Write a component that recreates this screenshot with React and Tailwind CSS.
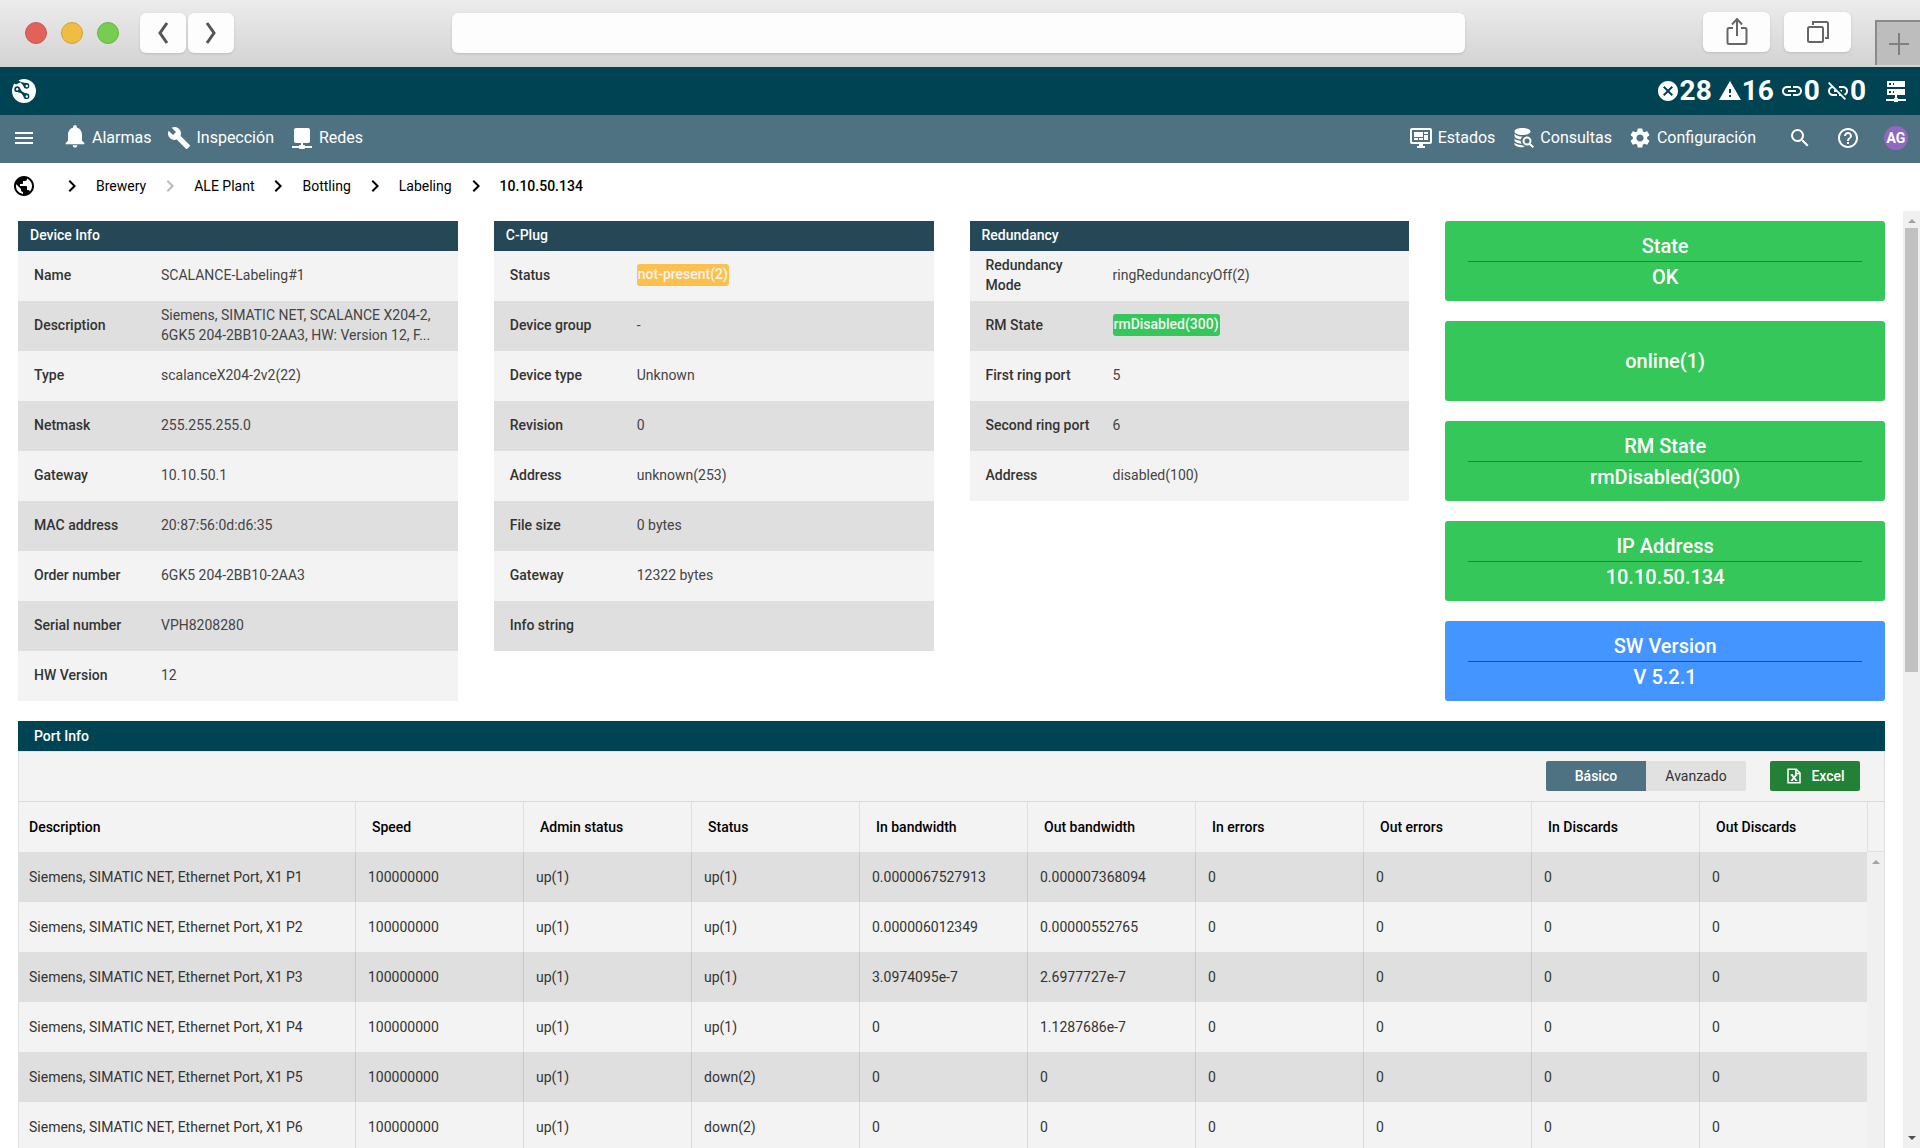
import clsx from "clsx";
import {
  MdBuild,
  MdCancel,
  MdChevronRight,
  MdHelpOutline,
  MdLink,
  MdLinkOff,
  MdMenu,
  MdNotifications,
  MdPublic,
  MdSearch,
  MdSettings,
  MdWarning,
} from "react-icons/md";

const deviceInfo = [
  ["Name", "SCALANCE-Labeling#1"],
  ["Description", "Siemens, SIMATIC NET, SCALANCE X204-2, 6GK5 204-2BB10-2AA3, HW: Version 12, F..."],
  ["Type", "scalanceX204-2v2(22)"],
  ["Netmask", "255.255.255.0"],
  ["Gateway", "10.10.50.1"],
  ["MAC address", "20:87:56:0d:d6:35"],
  ["Order number", "6GK5 204-2BB10-2AA3"],
  ["Serial number", "VPH8208280"],
  ["HW Version", "12"],
];

const cPlug = [
  ["Status", "not-present(2)", "bg-[#fdc04f]"],
  ["Device group", "-"],
  ["Device type", "Unknown"],
  ["Revision", "0"],
  ["Address", "unknown(253)"],
  ["File size", "0 bytes"],
  ["Gateway", "12322 bytes"],
  ["Info string", ""],
];

const redundancy = [
  ["Redundancy Mode", "ringRedundancyOff(2)"],
  ["RM State", "rmDisabled(300)", "bg-[#35c759]"],
  ["First ring port", "5"],
  ["Second ring port", "6"],
  ["Address", "disabled(100)"],
];

const tiles = [
  { title: "State", value: "OK" },
  { value: "online(1)" },
  { title: "RM State", value: "rmDisabled(300)" },
  { title: "IP Address", value: "10.10.50.134" },
  { title: "SW Version", value: "V 5.2.1", blue: true },
];

const columns = [
  "Description",
  "Speed",
  "Admin status",
  "Status",
  "In bandwidth",
  "Out bandwidth",
  "In errors",
  "Out errors",
  "In Discards",
  "Out Discards",
];

const ports = [
  ["P1", "up(1)", "0.0000067527913", "0.000007368094"],
  ["P2", "up(1)", "0.000006012349", "0.00000552765"],
  ["P3", "up(1)", "3.0974095e-7", "2.6977727e-7"],
  ["P4", "up(1)", "0", "1.1287686e-7"],
  ["P5", "down(2)", "0", "0"],
  ["P6", "down(2)", "0", "0"],
].map(([port, status, inBw, outBw]) => [
  `Siemens, SIMATIC NET, Ethernet Port, X1 ${port}`,
  "100000000",
  "up(1)",
  status,
  inBw,
  outBw,
  "0",
  "0",
  "0",
  "0",
]);

function LogoIcon() {
  return (
    <svg viewBox="0 0 24 24" className="size-6">
      <circle cx="12" cy="12" r="12" fill="#fff" />
      <g fill="#004454">
        <path d="M2 4 L6 1 L9 3 L4 5.500Z" />
        <path d="M8 2.800 L12 7.500 L16 4.500Z" />
        <path d="M4 12.500 L7.500 8.500 L10 12.500 L16 15.500 L13 19.500 L9.500 14.500Z" />
        <circle cx="14.500" cy="6.800" r="2.900" />
        <circle cx="5.200" cy="10.200" r="2.900" />
        <circle cx="14.500" cy="17.200" r="2.900" />
      </g>
      <g fill="#fff">
        <circle cx="14.800" cy="7" r="1.200" />
        <circle cx="5.200" cy="10.200" r="1.200" />
        <circle cx="14.800" cy="17.500" r="1.200" />
      </g>
    </svg>
  );
}

function ServerNetworkIcon() {
  return (
    <svg viewBox="0 0 24 24" className="size-6" fill="currentColor">
      <path
        fillRule="evenodd"
        d="M3 2h18v6H3zM5 4v2h2V4zM9 4v2h1V4zM3 10h18v6H3zM5 12v2h2v-2zM9 12v2h1v-2zM11 16h2v3h1v1h8v2h-8v1h-4v-1H2v-2h8v-1h1z"
      />
    </svg>
  );
}

function NetworkIcon() {
  return (
    <svg viewBox="0 0 24 24" className="size-6" fill="currentColor">
      <path d="M6 2h12a2 2 0 0 1 2 2v11a2 2 0 0 1-2 2h-5v2h1a1 1 0 0 1 1 1h7v2h-7a1 1 0 0 1-1 1h-4a1 1 0 0 1-1-1H2v-2h7a1 1 0 0 1 1-1h1v-2H6a2 2 0 0 1-2-2V4a2 2 0 0 1 2-2z" />
    </svg>
  );
}

function MonitorDashboardIcon() {
  return (
    <svg viewBox="0 0 24 24" className="size-6" fill="currentColor">
      <path d="M21 16V4H3v12h18m0-14a2 2 0 0 1 2 2v12a2 2 0 0 1-2 2h-7v2h2v2H8v-2h2v-2H3a2 2 0 0 1-2-2V4c0-1.1.9-2 2-2h18M5 6h9v5H5V6m10 0h4v2h-4V6m4 3v5h-4V9h4M5 12h4v2H5v-2m5 0h4v2h-4v-2z" />
    </svg>
  );
}

function DatabaseSearchIcon() {
  return (
    <svg viewBox="0 0 24 24" className="size-6" fill="currentColor">
      <path d="M19.700 17.600c.5-.7.8-1.600.8-2.500 0-2.500-2-4.500-4.500-4.500s-4.500 2-4.500 4.500 2 4.500 4.500 4.500c.9 0 1.700-.3 2.400-.7l3.200 3.100 1.400-1.400-3.300-3M16 17.600a2.500 2.500 0 1 1 0-5 2.500 2.500 0 0 1 0 5z" />
      <path d="M3.500 5.500C3.500 3.500 7 2 11.500 2s8 1.500 8 3.500S16 9 11.500 9s-8-1.500-8-3.500zM3.500 7.700c1.300 1.700 4.200 2.800 7.800 2.900-.7.800-1.200 1.700-1.400 2.700-3.600-.3-6.400-1.700-6.400-3.300zM3.500 12.500c1.200 1.300 3.500 2.100 6.200 2.400.1 1 .4 2 .9 2.800-4-.2-7.100-1.600-7.100-3.400zM3.500 16.800c1.600 1.500 4.600 2.300 8 2.500.8.900 1.600 1.400 2.500 1.800-.8.100-1.600.1-2.500.1-4.500 0-8-1.500-8-3z" />
    </svg>
  );
}

function ExcelIcon() {
  return (
    <svg viewBox="0 0 24 24" className="size-[18px]" fill="none" stroke="currentColor" strokeWidth="2">
      <path d="M15 3H4v18h16V8z" />
      <path d="M14.500 3v5.500H20" />
      <path d="M9 10.500l6 7.500M15 10.500L9 18" strokeWidth="2.400" />
      <path d="M7.500 10.500h3M13.500 10.500h3M7.500 18h3M13.500 18h3" strokeWidth="1.500" />
    </svg>
  );
}

function BrowserBar() {
  return (
    <div className="flex h-[67px] shrink-0 items-start bg-linear-to-b from-[#ececec] to-[#d3d3d3] pl-[25px]">
      <div className="mt-[22px] flex gap-[14px]">
        <span className="size-[22px] rounded-full border border-[#cf5650] bg-[#e0625b]" />
        <span className="size-[22px] rounded-full border border-[#d3a13c] bg-[#f0bd42]" />
        <span className="size-[22px] rounded-full border border-[#66b544] bg-[#78cc52]" />
      </div>
      <div className="mt-[13px] ml-[21px] flex gap-0.5">
        <button aria-label="Back" className="flex h-10 w-[46px] items-center justify-center rounded-md bg-[#fdfdfd] shadow-sm">
          <svg viewBox="0 0 12 24" className="h-6 w-3" fill="none" stroke="#555" strokeWidth="3">
            <path d="M10 2 L3 12 L10 22" />
          </svg>
        </button>
        <button aria-label="Forward" className="flex h-10 w-[46px] items-center justify-center rounded-md bg-[#fdfdfd] shadow-sm">
          <svg viewBox="0 0 12 24" className="h-6 w-3" fill="none" stroke="#555" strokeWidth="3">
            <path d="M2 2 L9 12 L2 22" />
          </svg>
        </button>
      </div>
      <input aria-label="Address bar" className="mt-[13px] ml-[218px] h-10 min-w-0 flex-1 rounded-md bg-[#fdfdfd] px-4 shadow-sm" />
      <div className="mt-3 mr-6 ml-[238px] flex gap-[14px]">
        <button aria-label="Share" className="flex h-10 w-[67px] items-center justify-center rounded-md bg-[#fdfdfd] shadow-sm">
          <svg viewBox="0 0 22 28" className="h-7 w-[22px]" fill="none" stroke="#666" strokeWidth="2">
            <path d="M7 10H3a1.500 1.500 0 0 0-1.500 1.500v13A1.500 1.500 0 0 0 3 26h16a1.500 1.500 0 0 0 1.500-1.500v-13A1.500 1.500 0 0 0 19 10h-4M11 18V1M6 6.500L11 1l5 5.500" />
          </svg>
        </button>
        <button aria-label="Show tabs" className="flex h-10 w-[67px] items-center justify-center rounded-md bg-[#fdfdfd] shadow-sm">
          <svg viewBox="0 0 24 24" className="size-6" fill="none" stroke="#666" strokeWidth="2">
            <rect x="2" y="7" width="15" height="15" rx="1.500" />
            <path d="M7 5V2h13.500a1.500 1.500 0 0 1 1.500 1.500V18h-3" />
          </svg>
        </button>
      </div>
      <button aria-label="New tab" className="mt-5 flex h-[45px] w-[45px] items-center justify-center border-t-2 border-l-2 border-[#8a8a8a] bg-[#bdbdbd]">
        <svg viewBox="0 0 20 22" className="h-[22px] w-5" stroke="#808080" strokeWidth="2">
          <path d="M10 0V22M0 11H20" />
        </svg>
      </button>
    </div>
  );
}

function Counter({ icon, value, label }) {
  return (
    <span aria-label={label} className="flex items-center">
      {icon}
      {value}
    </span>
  );
}

function NavItem({ icon, text }) {
  return (
    <a href="#" className="flex items-center gap-[5px]">
      {icon}
      {text}
    </a>
  );
}

function TopBars() {
  return (
    <header className="shrink-0 text-white">
      <div className="flex h-12 items-center justify-between bg-[#004454] px-3">
        <a href="#" aria-label="Home">
          <LogoIcon />
        </a>
        <div className="flex items-center gap-1.5 text-[28px] leading-none font-bold">
          <Counter label="Errors" value="28" icon={<MdCancel className="size-6" />} />
          <Counter label="Warnings" value="16" icon={<MdWarning className="size-6" />} />
          <Counter label="Linked" value="0" icon={<MdLink className="size-6" />} />
          <Counter label="Unlinked" value="0" icon={<MdLinkOff className="size-6" />} />
          <button aria-label="Servers" className="ml-3">
            <ServerNetworkIcon />
          </button>
        </div>
      </div>
      <nav className="flex h-12 items-center bg-[#4f7282] px-3 pb-0.5 text-base">
        <button aria-label="Menu" className="mr-[27px]">
          <MdMenu className="size-6" />
        </button>
        <div className="flex gap-4">
          <NavItem text="Alarmas" icon={<MdNotifications className="-mx-0.5 mb-1 size-7" />} />
          <NavItem text="Inspección" icon={<MdBuild className="size-6" />} />
          <NavItem text="Redes" icon={<NetworkIcon />} />
        </div>
        <div className="ml-auto flex gap-4">
          <NavItem text="Estados" icon={<MonitorDashboardIcon />} />
          <NavItem text="Consultas" icon={<DatabaseSearchIcon />} />
          <NavItem text="Configuración" icon={<MdSettings className="size-6" />} />
        </div>
        <div className="ml-8 flex items-center gap-6">
          <button aria-label="Search">
            <MdSearch className="size-6" />
          </button>
          <button aria-label="Help">
            <MdHelpOutline className="size-6" />
          </button>
          <button className="size-6 rounded-full bg-[#9068be] text-sm font-bold">AG</button>
        </div>
      </nav>
    </header>
  );
}

function Breadcrumb() {
  const items = ["Brewery", "ALE Plant", "Bottling", "Labeling"];
  return (
    <nav aria-label="Breadcrumb" className="flex h-12 shrink-0 items-center px-3 pb-0.5 text-sm text-black">
      <a href="#" aria-label="World" className="mr-6">
        <MdPublic className="size-6" />
      </a>
      {items.map((item, i) => (
        <span key={item} className="flex items-center">
          <MdChevronRight className={clsx("mr-3 size-6", i === 1 && "text-[#bbb]")} />
          <a href="#" className="mr-3">
            {item}
          </a>
        </span>
      ))}
      <MdChevronRight className="mr-3 size-6" />
      <span className="font-medium">10.10.50.134</span>
    </nav>
  );
}

function InfoPanel({ title, rows }) {
  return (
    <section className="text-sm leading-5 text-[#333]">
      <h2 className="h-[30px] bg-[#244856] px-3 leading-[28px] font-medium text-white">{title}</h2>
      <dl>
        {rows.map(([name, value, badge]) => (
          <div key={name} className="flex h-[50px] items-center bg-[#f3f3f3] px-4 pb-0.5 even:bg-[#dfdfdf]">
            <dt className="w-[127px] shrink-0 pr-4 font-medium">{name}</dt>
            <dd className="text-[#444]">
              {badge ? <span className={clsx("inline-block rounded-[3px] px-px pb-0.5 font-medium text-[#f3f3f3]", badge)}>{value}</span> : value}
            </dd>
          </div>
        ))}
      </dl>
    </section>
  );
}

function Tile({ title, value, blue }) {
  return (
    <div
      className={clsx(
        "flex h-20 flex-col justify-center rounded-[3px] px-[23px] text-center text-xl leading-[30px] font-medium text-white",
        blue ? "bg-[#4495ff]" : "bg-[#35c759]"
      )}
    >
      {title && <div className={clsx("border-b", blue ? "border-[#0f52b5]" : "border-[#23833b]")}>{title}</div>}
      <div>{value}</div>
    </div>
  );
}

function Arrow({ down }) {
  return (
    <svg viewBox="0 0 8 4" className="mx-auto h-1 w-2" fill={down ? "#505050" : "#a3a3a3"}>
      <path d={down ? "M0 0H8L4 4Z" : "M0 4H8L4 0Z"} />
    </svg>
  );
}

function PortTable() {
  return (
    <section className="mt-5 text-sm text-[#333]">
      <h2 className="h-[30px] bg-[#004454] px-4 leading-[30px] font-medium text-white">Port Info</h2>
      <div className="border border-[#dee2e6] bg-[#f3f3f3]">
        <div className="flex h-[50px] items-center justify-end border-b border-[#d6dadc] pr-6 pb-px">
          <button className="h-[30px] w-[100px] rounded-l-xs bg-[#4f7282] font-medium text-white">Básico</button>
          <button className="h-[30px] w-[100px] rounded-r-xs bg-[#e1e1e1]">Avanzado</button>
          <button className="ml-6 flex h-[30px] w-[90px] items-center justify-center gap-2 rounded-xs bg-[#228137] font-medium text-white">
            <ExcelIcon />
            Excel
          </button>
        </div>
        <div className="flex">
          <div className="min-w-0 flex-1">
            <table className="w-full table-fixed border-separate border-spacing-0 text-left">
              <thead className="text-black">
                <tr className="h-[50px]">
                  {columns.map((col) => (
                    <th key={col} className="border-l border-[#dee2e6] pl-4 font-medium first:w-2/11 first:border-l-0 first:pl-2.5">
                      {col}
                    </th>
                  ))}
                </tr>
              </thead>
              <tbody>
                {ports.map((row) => (
                  <tr key={row[0]} className="h-[50px] odd:bg-[#dfdfdf]">
                    {row.map((cell, i) => (
                      <td key={i} className="border-l border-black/10 pl-3 first:border-l-0 first:pl-2.5">
                        {cell}
                      </td>
                    ))}
                  </tr>
                ))}
              </tbody>
            </table>
          </div>
          <div className="w-[17px] bg-[#f0f0f0]">
            <div className="h-[50px] border-b border-l border-[#dee2e6] bg-[#f3f3f3]" />
            <div className="pt-2">
              <Arrow />
            </div>
          </div>
        </div>
      </div>
    </section>
  );
}

export default function App() {
  return (
    <div className="flex h-screen flex-col overflow-hidden bg-white font-['Roboto',sans-serif]">
      <BrowserBar />
      <TopBars />
      <Breadcrumb />
      <div className="flex min-h-0 flex-1">
        <main className="min-w-0 flex-1 overflow-hidden px-[18px] pt-2.5">
          <div className="grid grid-cols-4 items-start gap-9">
            <InfoPanel title="Device Info" rows={deviceInfo} />
            <InfoPanel title="C-Plug" rows={cPlug} />
            <InfoPanel title="Redundancy" rows={redundancy} />
            <div className="flex flex-col gap-5">
              {tiles.map((tile) => (
                <Tile key={tile.value} {...tile} />
              ))}
            </div>
          </div>
          <PortTable />
        </main>
        <div className="flex w-[17px] flex-col bg-[#f0f0f0] pt-2 pb-2">
          <Arrow />
          <div className="mx-auto mt-[5px] h-[444px] w-[13px] bg-[#c1c1c1]" />
          <div className="mt-auto">
            <Arrow down />
          </div>
        </div>
      </div>
    </div>
  );
}
